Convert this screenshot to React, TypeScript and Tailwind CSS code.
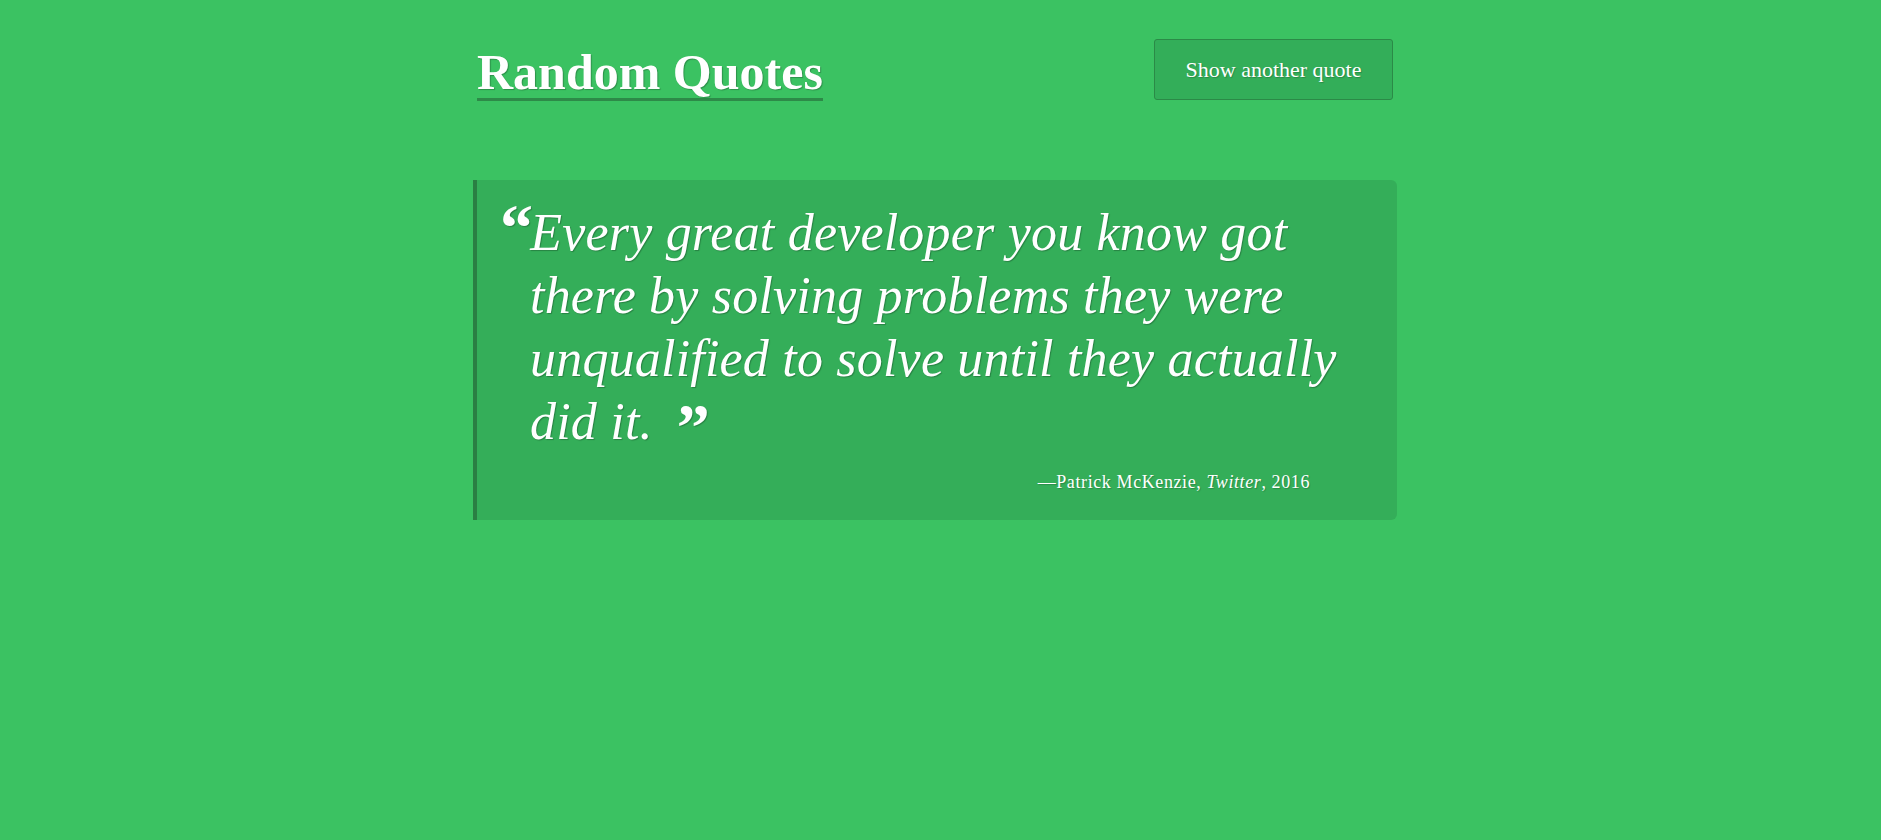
const quoteLines = [
  "Every great developer you know got",
  "there by solving problems they were",
  "unqualified to solve until they actually",
  "did it.",
];

export default function App() {
  return (
    <div className="min-h-[840px] w-full bg-[#3bc262] font-['Liberation_Serif',serif] text-white">
      <div className="flex justify-center pr-[11px]">
        <div className="w-[924px]">
          <header className="flex items-start justify-between px-[4px] pt-[39px]">
            <h1 className="mt-[7px] border-b-[3px] border-[#2d8a48] text-[50px] font-bold leading-[52px] [text-shadow:1px_1px_1px_rgba(0,0,0,0.25)]">
              Random Quotes
            </h1>
            <button className="h-[61px] w-[239px] rounded-[3px] border border-[#2b8a47] bg-[#33ae59] text-[22px] text-white [text-shadow:1px_1px_1px_rgba(0,0,0,0.2)]">
              Show another quote
            </button>
          </header>

          <blockquote className="mt-[79px] rounded-r-[6px] border-l-4 border-[#2a7f43] bg-[#34ae59] pb-[26px] pl-[53px] pr-[40px] pt-[21px]">
            <div className="text-[52px] italic leading-[63px] tracking-[0.2px] [text-shadow:1px_1px_1px_rgba(0,0,0,0.25)]">
              {quoteLines.map((line, i) => (
                <div key={line} className="whitespace-nowrap">
                  {i === 0 && (
                    <span className="relative -ml-[30px] -mr-[3px] text-[66px] font-bold not-italic leading-[0]">
                      “
                    </span>
                  )}
                  {line}
                  {i === quoteLines.length - 1 && (
                    <span className="relative top-[10px] ml-[24px] text-[66px] font-bold not-italic leading-[0]">
                      ”
                    </span>
                  )}
                </div>
              ))}
            </div>
            <p className="mr-[47px] mt-[17px] text-right text-[18px] leading-[24px] tracking-[0.6px] [text-shadow:1px_1px_1px_rgba(0,0,0,0.2)]">
              —Patrick McKenzie, <cite className="italic">Twitter</cite>, 2016
            </p>
          </blockquote>
        </div>
      </div>
    </div>
  );
}
